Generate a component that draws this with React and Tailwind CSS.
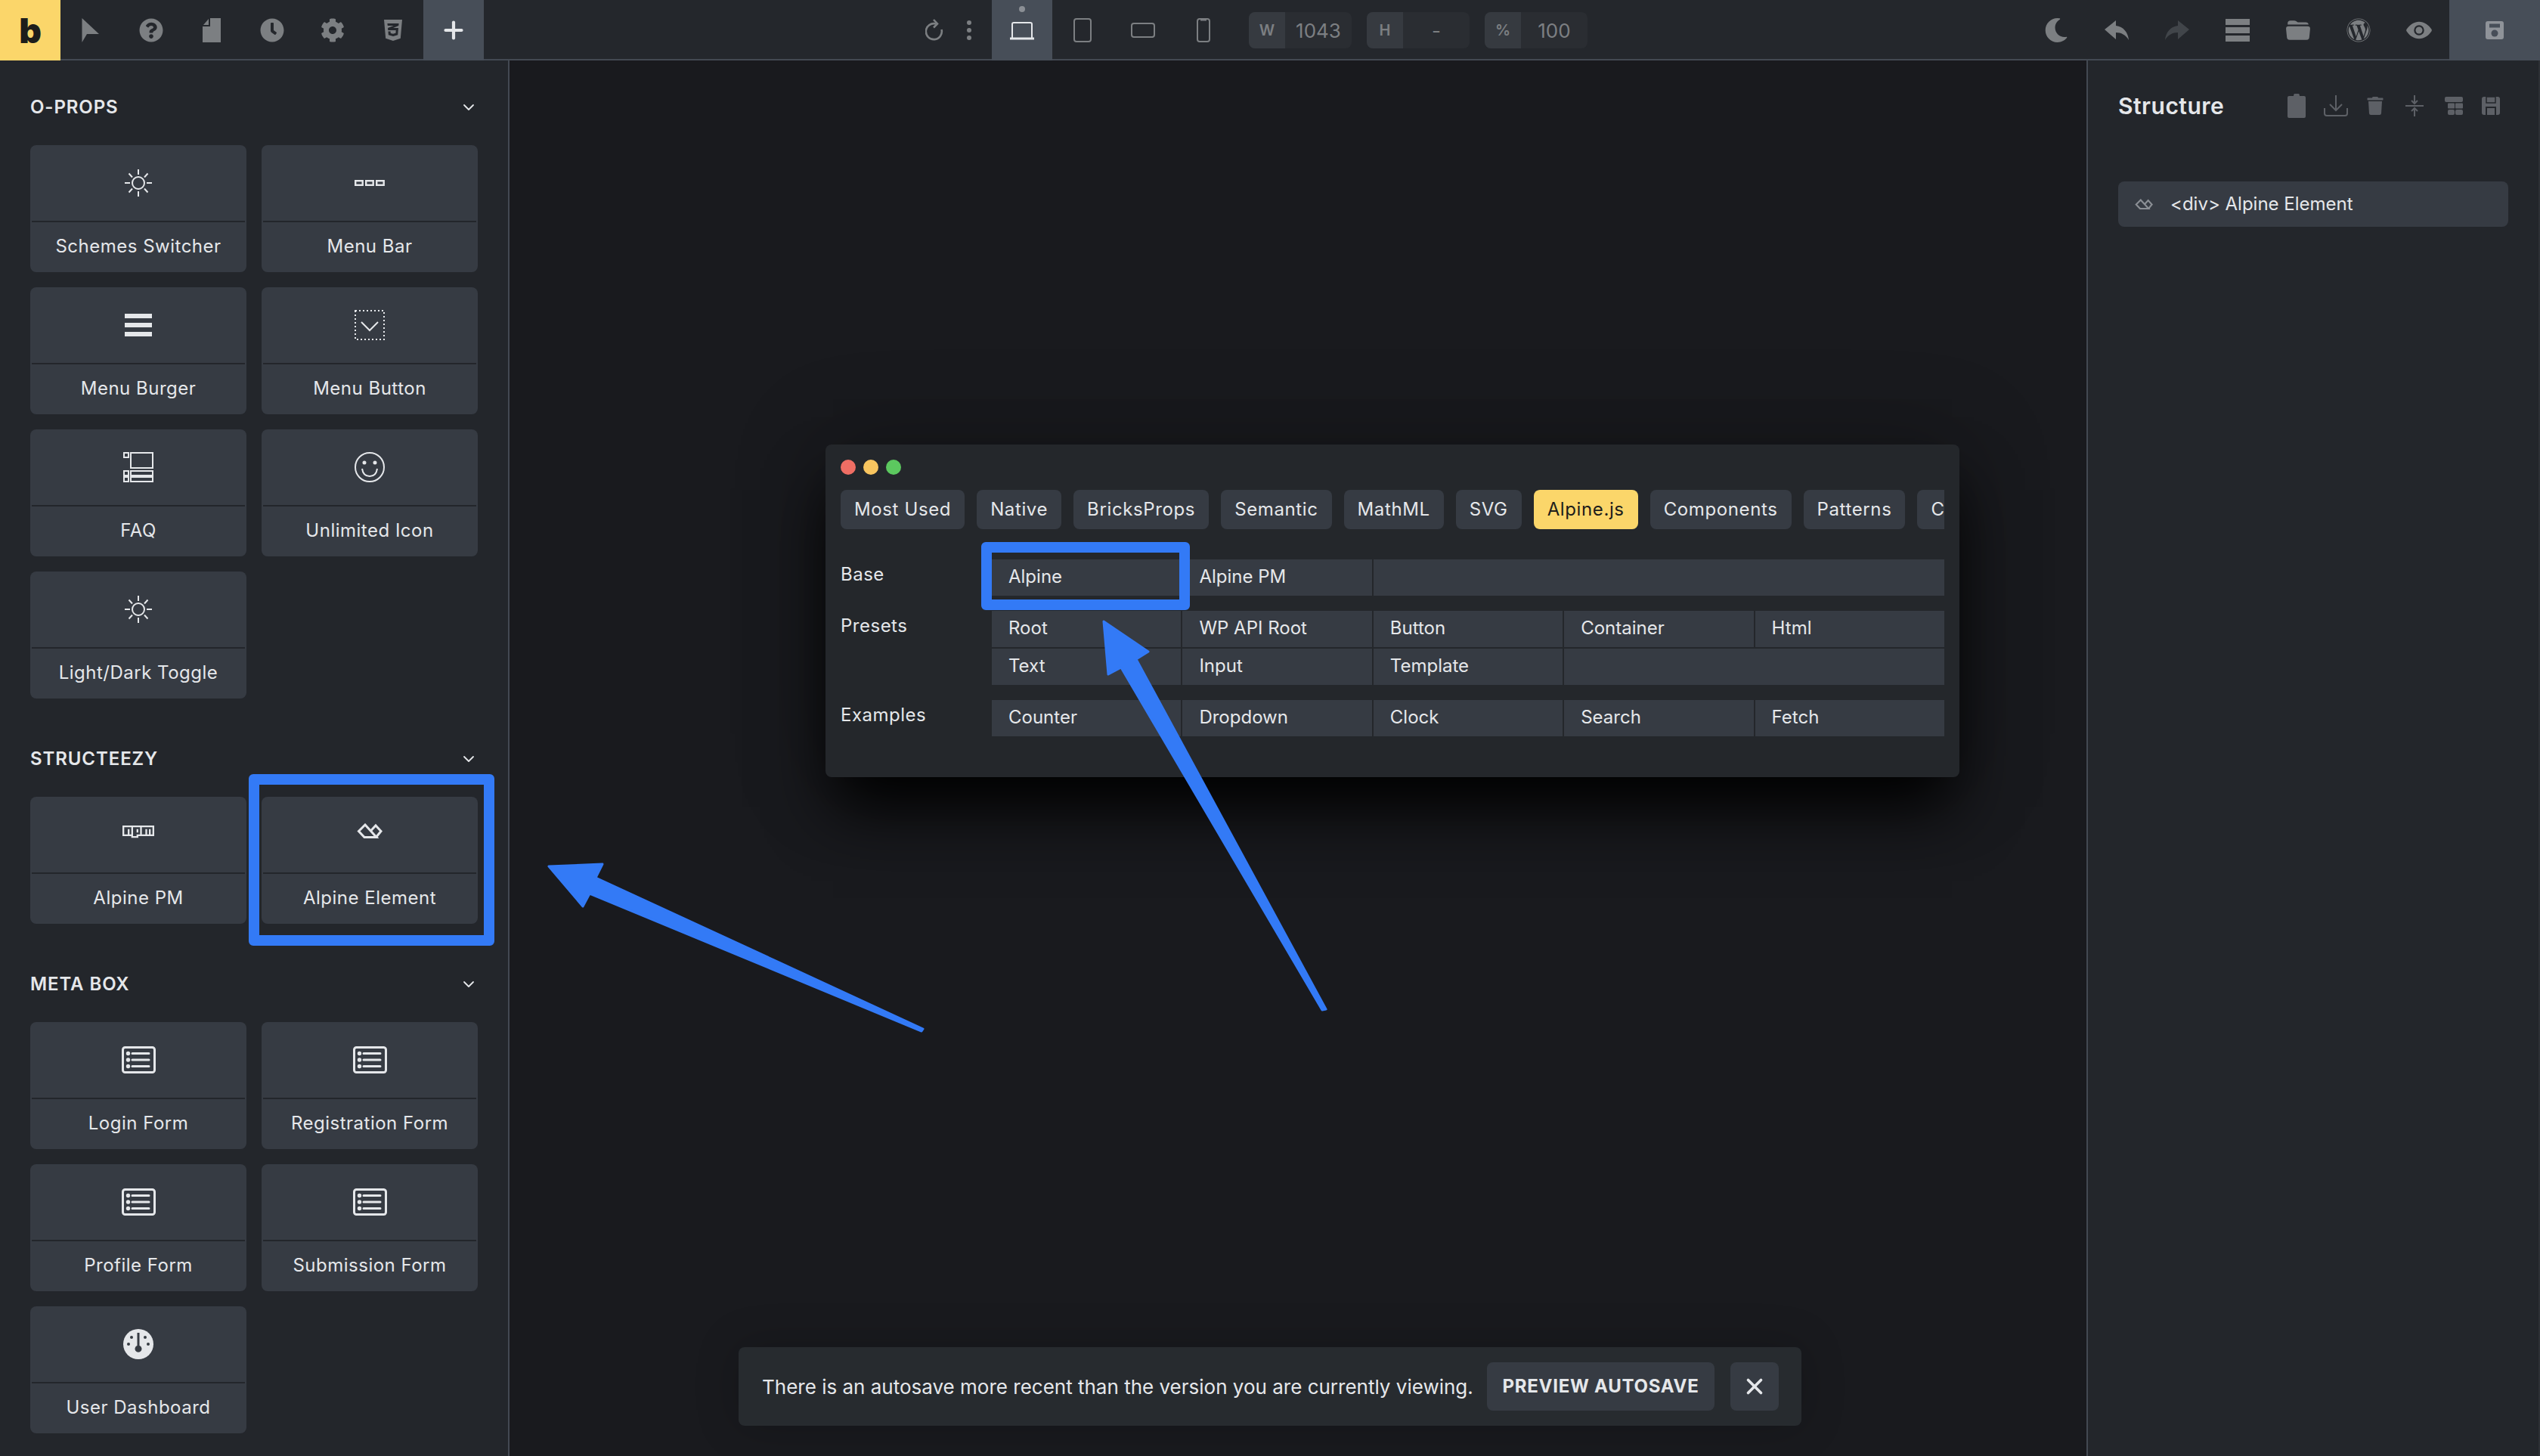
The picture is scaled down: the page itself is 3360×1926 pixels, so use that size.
import React from 'react';
import { FaQuestionCircle, FaClock, FaCog, FaCss3Alt, FaMoon, FaWordpress, FaTrash, FaNpm } from 'react-icons/fa';
import { IoFolderOpen, IoEye } from 'react-icons/io5';
import { ChevronDown, X, Plus } from 'lucide-react';

const Sun = () => (
  <svg width="38" height="38" viewBox="0 0 38 38" fill="none" stroke="#e5e7ea" strokeWidth="2">
    <circle cx="19" cy="19" r="8" />
    <path d="M19 1v7M19 30v7M1 19h7M30 19h7M6.5 6.5l4.500 5M31.500 6.500l-4.500 5M6.500 31.500l4.500-5M31.500 31.500l-4.500-5" />
  </svg>
);

const MenuBar = () => (
  <svg width="40" height="8" viewBox="0 0 40 8" fill="none" stroke="#e5e7ea" strokeWidth="2.400">
    <rect x="1.200" y="1.200" width="9.500" height="5.600" />
    <rect x="15.200" y="1.200" width="9.500" height="5.600" />
    <rect x="29.200" y="1.200" width="9.500" height="5.600" />
  </svg>
);

const Burger = () => (
  <div className="flex w-[36px] flex-col gap-[6px]">
    <div className="h-[6px] bg-[#e5e7ea]" />
    <div className="h-[6px] bg-[#e5e7ea]" />
    <div className="h-[6px] bg-[#e5e7ea]" />
  </div>
);

const MenuButton = () => (
  <svg width="40" height="40" viewBox="0 0 40 40" fill="none" stroke="#e5e7ea" strokeWidth="2">
    <rect x="1" y="1" width="38" height="38" strokeDasharray="2 3" />
    <path d="M9 16l11 11 11-11" />
  </svg>
);

const Faq = () => (
  <svg width="40" height="40" viewBox="0 0 40 40" fill="none" stroke="#e5e7ea" strokeWidth="2">
    <rect x="1" y="1" width="6" height="6" />
    <rect x="10" y="1" width="29" height="20" />
    <rect x="1" y="25" width="6" height="6" />
    <rect x="10" y="25" width="29" height="6" />
    <rect x="1" y="33" width="6" height="6" />
    <rect x="10" y="33" width="29" height="6" />
  </svg>
);

const Smiley = () => (
  <svg width="40" height="40" viewBox="0 0 40 40" fill="none" stroke="#e5e7ea" strokeWidth="2">
    <circle cx="20" cy="20" r="19" />
    <path d="M10 22c1 7 5 10 10 10s9-3 10-10" />
    <circle cx="13" cy="14" r="1.500" fill="#e5e7ea" />
    <circle cx="27" cy="14" r="1.500" fill="#e5e7ea" />
  </svg>
);

const AlpineIcon = ({ size = 34, color = '#e5e7ea' }) => (
  <svg width={size} height={size * 0.59} viewBox="0 0 34 20" fill="none" stroke={color} strokeWidth="3">
    <path d="M11 2L2.500 10.500 10 18.500h16L11 2z" />
    <path d="M18 10.500L25 3l7 7.500-6.500 8" />
  </svg>
);

const FormIcon = () => (
  <svg width="45" height="36" viewBox="0 0 45 36" fill="none" stroke="#e5e7ea" strokeWidth="3">
    <rect x="1.500" y="1.500" width="42" height="33" rx="3" />
    <path d="M14 9.500h22M14 18h22M14 26.500h22" strokeLinecap="round" />
    <circle cx="8.500" cy="9.500" r="1.200" fill="#e5e7ea" />
    <circle cx="8.500" cy="18" r="1.200" fill="#e5e7ea" />
    <circle cx="8.500" cy="26.500" r="1.200" fill="#e5e7ea" />
  </svg>
);

const Gauge = () => (
  <svg width="40" height="40" viewBox="0 0 40 40">
    <circle cx="20" cy="20" r="20" fill="#e5e7ea" />
    <path d="M18.500 5h3v17a4.500 4.500 0 1 1-3 0z" fill="#363b43" />
    <circle cx="11" cy="11" r="2" fill="#363b43" />
    <circle cx="29" cy="11" r="2" fill="#363b43" />
    <circle cx="7" cy="20" r="2" fill="#363b43" />
    <circle cx="33" cy="20" r="2" fill="#363b43" />
  </svg>
);

const Raised = ({ children }) => <div className="mb-[10px]">{children}</div>;

const sections = [
  {
    title: 'O-PROPS',
    mt: '',
    items: [
      ['Schemes Switcher', <Sun />],
      ['Menu Bar', <MenuBar />],
      ['Menu Burger', <Burger />],
      ['Menu Button', <MenuButton />],
      ['FAQ', <Faq />],
      ['Unlimited Icon', <Smiley />],
      ['Light/Dark Toggle', <Sun />],
    ],
  },
  {
    title: 'STRUCTEEZY',
    mt: 'mt-[64px]',
    items: [
      ['Alpine PM', <Raised><FaNpm size={42} color="#e5e7ea" /></Raised>],
      ['Alpine Element', <Raised><AlpineIcon /></Raised>],
    ],
  },
  {
    title: 'META BOX',
    mt: 'mt-[64px]',
    items: [
      ['Login Form', <FormIcon />],
      ['Registration Form', <FormIcon />],
      ['Profile Form', <FormIcon />],
      ['Submission Form', <FormIcon />],
      ['User Dashboard', <Gauge />],
    ],
  },
];

const tabs = ['Most Used', 'Native', 'BricksProps', 'Semantic', 'MathML', 'SVG', 'Alpine.js', 'Components', 'Patterns'];

function ElementCard({ label, icon }) {
  return (
    <div className="flex h-[168px] flex-col rounded-[8px] bg-[#363b43]">
      <div className="flex h-[100px] items-center justify-center">{icon}</div>
      <div className="mx-[2px] h-[2px] bg-[#23262b]" />
      <div className="flex h-[66px] items-center justify-center pb-[2px] text-[24px] tracking-[0.5px] text-[#e5e7ea]">{label}</div>
    </div>
  );
}

function Section({ title, mt, items }) {
  return (
    <div className={mt}>
      <div className="mb-[34px] flex h-[32px] items-center justify-between">
        <span className="text-[24px] font-semibold tracking-[0.9px] text-[#e5e7ea]">{title}</span>
        <ChevronDown size={24} strokeWidth={1.800} color="#e5e7ea" />
      </div>
      <div className="grid grid-cols-2 gap-x-[20px] gap-y-[20px]">
        {items.map(([label, icon]) => (
          <ElementCard key={label} label={label} icon={icon} />
        ))}
      </div>
    </div>
  );
}

function ToolItem({ children, active }) {
  return <div className={`flex h-[80px] w-[80px] shrink-0 items-center justify-center text-[#7c7f82] ${active ? 'bg-[#474e58]' : ''}`}>{children}</div>;
}

function SizeBox({ label, value }) {
  return (
    <div className="flex h-[48px] w-[136px] overflow-hidden rounded-[8px] bg-[#2a2d32] text-[#7c7f82]">
      <div className="flex w-[48px] items-center justify-center bg-[#363a40] text-[20px] font-semibold">{label}</div>
      <div className="flex flex-1 items-center justify-center text-[26px]">{value}</div>
    </div>
  );
}

const ReplyArrow = ({ flip, color }) => (
  <svg width="32" height="26" viewBox="0 0 32 26" fill={color} className={flip ? '-scale-x-100' : ''}>
    <path d="M0 12L15 0v7c10 1 16 9 17 19-4-7-10-10-17-10v9z" />
  </svg>
);

function Toolbar() {
  return (
    <div className="flex h-[80px] shrink-0 border-b-2 border-[#434952] bg-[#24272c]">
      <div className="flex h-[80px] w-[80px] shrink-0 items-center justify-center bg-[#fbd66a] text-[46px] font-black leading-none text-[#1d1d1b]">b</div>
      <ToolItem>
        <svg width="32" height="32" viewBox="0 0 32 32" fill="currentColor"><path d="M4.500 0L27 21H11L4.500 32z" /></svg>
      </ToolItem>
      <ToolItem><FaQuestionCircle size={32} /></ToolItem>
      <ToolItem>
        <svg width="24" height="32" viewBox="0 0 24 32" fill="currentColor">
          <path d="M10 0h14v32H0V11h10z" />
          <path d="M8 1v8H1z" />
        </svg>
      </ToolItem>
      <ToolItem><FaClock size={32} /></ToolItem>
      <ToolItem><FaCog size={32} /></ToolItem>
      <ToolItem><FaCss3Alt size={32} /></ToolItem>
      <div className="flex h-[80px] w-[80px] shrink-0 items-center justify-center bg-[#474e58]">
        <Plus size={36} strokeWidth={2.800} color="#e5e7ea" />
      </div>

      <div className="ml-[572px] flex h-[80px] w-[48px] items-center justify-center text-[#7c7f82]">
        <svg width="24" height="30" viewBox="0 0 24 30" fill="none" stroke="currentColor" strokeWidth="2.600">
          <path d="M14 6.500A10.500 10.500 0 1 0 21.500 14" />
          <path d="M11 1l5 5.500-5 5" />
        </svg>
      </div>
      <div className="flex h-[80px] w-[44px] flex-col items-center justify-center gap-[4px]">
        <div className="h-[6px] w-[6px] rounded-full bg-[#7c7f82]" />
        <div className="h-[6px] w-[6px] rounded-full bg-[#7c7f82]" />
        <div className="h-[6px] w-[6px] rounded-full bg-[#7c7f82]" />
      </div>
      <div className="relative ml-[8px] flex h-[80px] w-[80px] items-center justify-center bg-[#474e58]">
        <div className="absolute top-[8px] h-[8px] w-[8px] rounded-full bg-[#8b8f95]" />
        <svg className="mt-[2px]" width="32" height="24" viewBox="0 0 32 24" fill="none" stroke="#e5e7ea" strokeWidth="2">
          <path d="M3 21V3a2 2 0 0 1 2-2h22a2 2 0 0 1 2 2v18" />
          <path d="M0 22h32" strokeWidth="3" />
        </svg>
      </div>
      <ToolItem>
        <svg width="24" height="32" viewBox="0 0 24 32" fill="none" stroke="currentColor" strokeWidth="2"><rect x="1" y="1" width="22" height="30" rx="3" /></svg>
      </ToolItem>
      <ToolItem>
        <svg width="32" height="20" viewBox="0 0 32 20" fill="none" stroke="currentColor" strokeWidth="2"><rect x="1" y="1" width="30" height="18" rx="3" /></svg>
      </ToolItem>
      <ToolItem>
        <svg width="18" height="32" viewBox="0 0 18 32" fill="none" stroke="currentColor" strokeWidth="2">
          <rect x="1" y="1" width="16" height="30" rx="3" />
          <path d="M5 2h8" strokeWidth="3" />
        </svg>
      </ToolItem>
      <div className="ml-[20px] flex h-[80px] items-center gap-[20px]">
        <SizeBox label="W" value="1043" />
        <SizeBox label="H" value="-" />
        <SizeBox label="%" value="100" />
      </div>

      <div className="ml-auto flex">
        <ToolItem><FaMoon size={32} /></ToolItem>
        <ToolItem><ReplyArrow color="#7c7f82" /></ToolItem>
        <ToolItem><ReplyArrow flip color="#41454a" /></ToolItem>
        <ToolItem>
          <div className="flex w-[32px] flex-col gap-[3px]">
            <div className="h-[8px] bg-[#7c7f82]" />
            <div className="h-[8px] bg-[#7c7f82]" />
            <div className="h-[8px] bg-[#7c7f82]" />
          </div>
        </ToolItem>
        <ToolItem><IoFolderOpen size={34} /></ToolItem>
        <ToolItem><FaWordpress size={32} /></ToolItem>
        <ToolItem><IoEye size={36} /></ToolItem>
        <div className="flex h-[80px] w-[120px] items-center justify-center bg-[#474e58]">
          <svg width="24" height="24" viewBox="0 0 24 24">
            <path d="M3 0h18a3 3 0 0 1 3 3v18a3 3 0 0 1-3 3H3a3 3 0 0 1-3-3V3a3 3 0 0 1 3-3z" fill="#8f9399" />
            <rect x="5" y="3.500" width="14" height="5" fill="#474e58" />
            <circle cx="12" cy="16" r="4.500" fill="#474e58" />
          </svg>
        </div>
      </div>
    </div>
  );
}

function ModalCell({ label, span }) {
  return <div className={`flex h-[48px] items-center bg-[#363b43] pb-[2px] pl-[22px] text-[24px] text-[#e5e7ea] ${span || ''}`}>{label}</div>;
}

function RowLabel({ children }) {
  return <div className="w-[200px] pt-[4px] text-[24px] leading-[32px] tracking-[0.5px] text-[#e5e7ea]">{children}</div>;
}

function AlpineModal() {
  return (
    <div className="flex h-[440px] w-[1500px] flex-col rounded-[8px] bg-[#24272b] px-[20px] pt-[20px] shadow-[0_50px_80px_-10px_#000,0_0_120px_rgba(0,0,0,0.25)]">
      <div className="flex h-[20px] gap-[10px]">
        <div className="h-[20px] w-[20px] rounded-full bg-[#ef6e64]" />
        <div className="h-[20px] w-[20px] rounded-full bg-[#f8c55f]" />
        <div className="h-[20px] w-[20px] rounded-full bg-[#5cc85f]" />
      </div>
      <div className="mt-[20px] flex h-[52px] gap-[16px] overflow-hidden">
        {tabs.map((tab) => (
          <div
            key={tab}
            className={`flex h-[52px] shrink-0 items-center rounded-[8px] px-[18px] text-[24px] tracking-[0.62px] ${tab === 'Alpine.js' ? 'rounded-[4px] bg-[#fbd66a] text-[#1d1d1b]' : 'bg-[#363b43] text-[#e5e7ea]'}`}
          >
            {tab}
          </div>
        ))}
        <div className="flex h-[52px] w-[60px] shrink-0 items-center rounded-[8px] bg-[#363b43] pl-[18px] text-[24px] text-[#e5e7ea]">C</div>
      </div>
      <div className="mt-[40px] flex">
        <RowLabel>Base</RowLabel>
        <div className="grid flex-1 grid-cols-5 gap-x-[2px]">
          <ModalCell label="Alpine" />
          <ModalCell label="Alpine PM" />
          <ModalCell span="col-span-3" />
        </div>
      </div>
      <div className="mt-[20px] flex">
        <RowLabel>Presets</RowLabel>
        <div className="grid flex-1 grid-cols-5 gap-[2px]">
          <ModalCell label="Root" />
          <ModalCell label="WP API Root" />
          <ModalCell label="Button" />
          <ModalCell label="Container" />
          <ModalCell label="Html" />
          <ModalCell label="Text" />
          <ModalCell label="Input" />
          <ModalCell label="Template" />
          <ModalCell span="col-span-2" />
        </div>
      </div>
      <div className="mt-[20px] flex">
        <RowLabel>Examples</RowLabel>
        <div className="grid flex-1 grid-cols-5 gap-x-[2px]">
          <ModalCell label="Counter" />
          <ModalCell label="Dropdown" />
          <ModalCell label="Clock" />
          <ModalCell label="Search" />
          <ModalCell label="Fetch" />
        </div>
      </div>
    </div>
  );
}

function StructurePanel() {
  return (
    <div className="h-full w-[600px] shrink-0 border-l-2 border-r-2 border-l-[#434952] border-r-[#2d3035] bg-[#23262b] pl-[40px] pr-[40px] pt-[40px]">
      <div className="flex h-[40px] items-center">
        <span className="text-[30px] font-semibold tracking-[0.5px] text-[#e5e7ea]">Structure</span>
        <div className="ml-auto flex text-[#5d6066]">
          <div className="flex h-[40px] w-[52px] items-center justify-center">
            <svg width="24" height="32" viewBox="0 0 24 32" fill="currentColor">
              <path d="M2 3h6a4 4 0 0 1 8 0h6a2 2 0 0 1 2 2v25a2 2 0 0 1-2 2H2a2 2 0 0 1-2-2V5a2 2 0 0 1 2-2z" />
            </svg>
          </div>
          <div className="flex h-[40px] w-[52px] items-center justify-center">
            <svg width="32" height="28" viewBox="0 0 32 28" fill="none" stroke="currentColor" strokeWidth="2">
              <path d="M16 0v19M8 12l8 8 8-8M1 17v7a3 3 0 0 0 3 3h24a3 3 0 0 0 3-3v-7" />
            </svg>
          </div>
          <div className="flex h-[40px] w-[52px] items-center justify-center"><FaTrash size={24} /></div>
          <div className="flex h-[40px] w-[52px] items-center justify-center">
            <svg width="24" height="28" viewBox="0 0 24 28" fill="none" stroke="currentColor" strokeWidth="2">
              <path d="M12 0v10M8 7l4 4 4-4M0 14h24M12 28V18M8 21l4-4 4 4" />
            </svg>
          </div>
          <div className="flex h-[40px] w-[52px] items-center justify-center">
            <svg width="24" height="24" viewBox="0 0 24 24" fill="currentColor">
              <rect x="0" y="0" width="24" height="7" rx="2" />
              <rect x="4" y="8.500" width="9" height="7" rx="1" />
              <rect x="14" y="8.500" width="10" height="7" rx="1" />
              <rect x="4" y="17" width="9" height="7" rx="2" />
              <rect x="14" y="17" width="10" height="7" rx="2" />
            </svg>
          </div>
          <div className="flex h-[40px] w-[46px] items-center justify-center">
            <svg width="24" height="24" viewBox="0 0 24 24">
              <path d="M3 0h18a3 3 0 0 1 3 3v18a3 3 0 0 1-3 3H3a3 3 0 0 1-3-3V3a3 3 0 0 1 3-3z" fill="currentColor" />
              <rect x="6" y="0" width="12" height="8" fill="none" stroke="#23262b" strokeWidth="1.500" />
              <rect x="5" y="13" width="14" height="11" fill="#23262b" />
              <rect x="7" y="15" width="10" height="9" fill="currentColor" />
            </svg>
          </div>
        </div>
      </div>
      <div className="mt-[80px] flex h-[60px] w-[516px] items-center rounded-[8px] bg-[#363b43] pl-[22px] text-[24px] text-[#e5e7ea]">
        <AlpineIcon size={24} color="#8b8f95" />
        <span className="ml-[23px]">{'<div> Alpine Element'}</span>
      </div>
    </div>
  );
}

export default function App() {
  return (
    <div className="relative flex h-[1926px] w-[3360px] flex-col overflow-hidden bg-[#191a1e] font-[Inter,sans-serif]">
      <Toolbar />
      <div className="flex min-h-0 flex-1">
        <div className="h-full w-[674px] shrink-0 overflow-hidden border-r-2 border-[#434952] bg-[#23262b] pl-[40px] pr-[40px] pt-[46px]">
          {sections.map((section) => (
            <Section key={section.title} {...section} />
          ))}
        </div>
        <div className="relative min-w-0 flex-1 pl-[418px] pt-[508px]">
          <AlpineModal />
          <div className="absolute bottom-[40px] left-[303px] flex h-[104px] w-[1406px] items-center rounded-[8px] bg-[#272b2f] pl-[31px] pr-[30px] shadow-[0_0_60px_rgba(0,0,0,0.2)]">
            <span className="text-[26px] text-[#e5e7ea]">There is an autosave more recent than the version you are currently viewing.</span>
            <div className="ml-auto flex h-[64px] w-[301px] items-center justify-center rounded-[8px] bg-[#363b43] text-[24px] font-bold tracking-[0.03em] text-[#e5e7ea]">PREVIEW AUTOSAVE</div>
            <div className="ml-[21px] flex h-[64px] w-[64px] items-center justify-center rounded-[8px] bg-[#363b43]">
              <X size={34} strokeWidth={2.600} color="#e5e7ea" />
            </div>
          </div>
        </div>
        <StructurePanel />
      </div>

      {/* annotations */}
      <div className="absolute left-[329px] top-[1024px] h-[227px] w-[325px] rounded-[6px] border-[14px] border-[#337af6]" />
      <div className="absolute left-[1298px] top-[717px] h-[90px] w-[276px] rounded-[6px] border-[14px] border-[#337af6]" />
      <svg className="pointer-events-none absolute left-0 top-0" width="3360" height="1926" fill="#337af6" stroke="#337af6" strokeWidth="3" strokeLinejoin="round">
        <polygon points="726,1146 797,1143 788,1161 1221,1361 1219,1364 780,1182 771,1199" />
        <polygon points="1460,822 1519,862 1503,872 1754,1335 1749,1336 1483,883 1466,892" />
      </svg>
    </div>
  );
}
